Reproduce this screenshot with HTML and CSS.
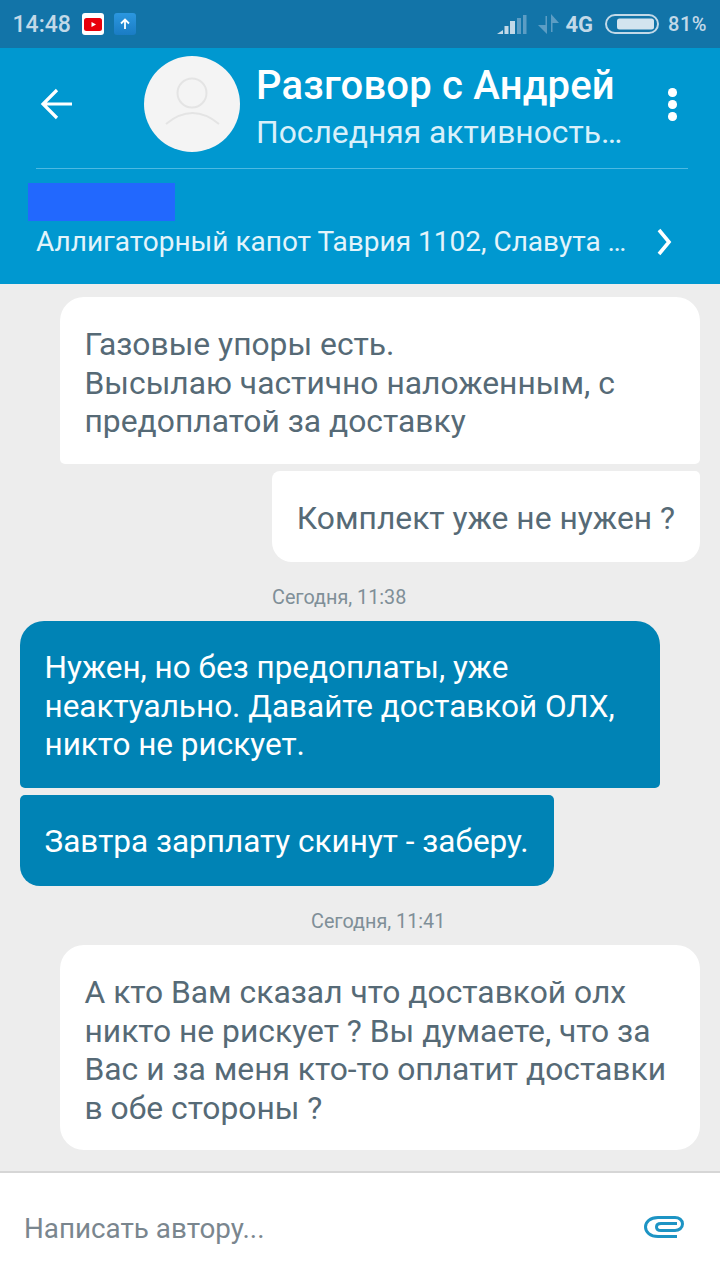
FILE: index.html
```html
<!DOCTYPE html>
<html lang="ru">
<head>
<meta charset="utf-8">
<title>Разговор с Андрей</title>
<link rel="stylesheet" href="styles.css">
</head>
<body>
<div class="app">
  <div class="status">
    <span class="time">14:48</span>
    <span class="note yt"><svg width="24" height="24" viewBox="0 0 24 24"><rect x="1" y="1" width="22" height="22" rx="3" fill="#fff"/><rect x="3" y="6" width="18" height="13" rx="2.5" fill="#e8000b"/><path d="M10.5 10l4.500 2.500-4.500 2.500z" fill="#fff"/></svg></span>
    <span class="note"><svg width="24" height="24" viewBox="0 0 24 24"><defs><linearGradient id="up" x1="0" y1="0" x2="0" y2="1"><stop offset="0" stop-color="#2b97e0"/><stop offset="1" stop-color="#1a7cc4"/></linearGradient></defs><rect x="1" y="1" width="22" height="22" rx="3" fill="url(#up)"/><path d="M12 17V7.500M8 11.500l4-4 4 4" fill="none" stroke="#fff" stroke-width="1.800"/></svg></span>
    <span class="spacer"></span>
    <svg class="signal" width="30" height="24" viewBox="0 0 30 24"><path d="M0 22l6-4v4z" fill="#c2d9e8"/><rect x="7.500" y="14" width="4" height="8" fill="#c2d9e8"/><rect x="13" y="9" width="5" height="13" fill="#c2d9e8"/><rect x="20" y="6" width="4" height="16" fill="#5c9dc4"/><rect x="26" y="3" width="3.500" height="19" fill="#5c9dc4"/></svg>
    <svg class="updown" width="24" height="24" viewBox="0 0 24 24"><path d="M10 22V4H8.500v9H1zM14 2v18h1.500v-9H22z" fill="#5c9dc4"/></svg>
    <span class="net">4G</span>
    <svg class="batt" width="54" height="20" viewBox="0 0 54 20"><rect x="1" y="1" width="52" height="18" rx="9" fill="none" stroke="#c2d9e8" stroke-width="2"/><rect x="12" y="4.500" width="37" height="11" rx="2.500" fill="#d3e4ef"/></svg>
    <span class="pct">81%</span>
  </div>
  <header class="head">
    <div class="top">
      <svg class="back" width="32" height="32" viewBox="0 0 32 32"><path d="M32 16H3M17 2L3 16l14 14" fill="none" stroke="#fff" stroke-width="3.200"/></svg>
      <div class="avatar"><svg width="96" height="96" viewBox="0 0 96 96"><circle cx="48" cy="37" r="14.500" fill="none" stroke="#e4e4e4" stroke-width="2"/><path d="M22 68Q48.500 46 75 68" fill="none" stroke="#e4e4e4" stroke-width="2"/></svg></div>
      <div class="who">
        <div class="title">Разговор с Андрей</div>
        <div class="seen">Последняя активность…</div>
      </div>
      <div class="dots"><i></i><i></i><i></i></div>
    </div>
    <div class="rule"></div>
    <div class="mask"></div>
    <div class="ad">
      <span class="adtext">Аллигаторный капот Таврия 1102, Славута …</span>
      <svg width="20" height="28" viewBox="0 0 20 28"><path d="M4 2l10 12L4 26" fill="none" stroke="#fff" stroke-width="3.600"/></svg>
    </div>
  </header>
  <main class="chat">
    <div class="msg in b1">Газовые упоры есть.<br>Высылаю частично наложенным, с предоплатой за доставку</div>
    <div class="msg in single b2">Комплект уже не нужен ?</div>
    <div class="stamp s1">Сегодня, 11:38</div>
    <div class="msg out b3">Нужен, но без предоплаты, уже неактуально. Давайте доставкой ОЛХ, никто не рискует.</div>
    <div class="msg out single b4">Завтра зарплату скинут - заберу.</div>
    <div class="stamp s2">Сегодня, 11:41</div>
    <div class="msg in b5">А кто Вам сказал что доставкой олх никто не рискует ? Вы думаете, что за Вас и за меня кто-то оплатит доставки в обе стороны ?</div>
  </main>
  <footer class="input">
    <span class="ph">Написать автору...</span>
    <svg class="clip" width="40" height="22" viewBox="0 0 40 22"><path d="M33 20.500H14C6 20.500 1.500 16 1.500 11S6 1.500 14 1.500H31C35 1.500 38.500 4 38.500 8S35 14.500 31 14.500H17C14 14.500 12.500 13 12.500 11S14 7.500 17 7.500H33" fill="none" stroke="#1d94c4" stroke-width="3"/></svg>
  </footer>
</div>
</body>
</html>
```
FILE: styles.css
```css
* { box-sizing: border-box; }
html, body { margin: 0; padding: 0; }
body { width: 720px; height: 1280px; overflow: hidden; font-family: Roboto, "Noto Sans", sans-serif; background: #ededed; }
.app { width: 720px; height: 1280px; display: flex; flex-direction: column; }
.status { height: 48px; flex: none; background: #1274a8; display: flex; align-items: center; padding: 0 13px 0 12.500px; color: #c2d9e8; font-weight: 500; }
.time { font-size: 23px; margin-right: 10px; }
.note { width: 24px; height: 24px; margin-right: 8px; display: block; }
.note svg { display: block; }
.spacer { flex: 1; }
.signal { margin-right: 10px; }
.updown { margin-right: 4px; }
.net { font-size: 22px; font-weight: 700; margin-right: 12px; }
.batt { margin-right: 9px; }
.pct { font-size: 20px; letter-spacing: .5px; }
.head { height: 236px; flex: none; background: #0098d0; color: #fff; padding: 0 32px 0 36px; display: flex; flex-direction: column; }
.top { height: 120px; display: flex; align-items: flex-start; }
.back { margin: 40px 72px 0 4px; flex: none; }
.avatar { width: 96px; height: 96px; margin-top: 8px; border-radius: 50%; background: #f4f4f4; flex: none; }
.avatar svg { display: block; }
.who { margin-left: 16px; flex: 1; }
.title { font-size: 40px; font-weight: 500; line-height: 42px; margin-top: 17px; letter-spacing: .2px; }
.seen { font-size: 31.800px; line-height: 36px; margin-top: 7px; color: #d9f0fa; }
.dots { width: 12px; margin: 40px 8px 0 0; display: flex; flex-direction: column; gap: 3.500px; }
.dots i { display: block; width: 8.500px; height: 8.500px; border-radius: 50%; background: #fff; }
.rule { height: 1px; background: #4db9e2; }
.mask { width: 147px; height: 38px; margin: 14px 0 0 -8px; background: #2268fe; }
.ad { display: flex; align-items: center; justify-content: space-between; margin-top: 3px; padding-right: 13px; }
.adtext { font-size: 28px; line-height: 36px; color: #e3f4fb; }
.chat { flex: 1; padding: 13px 20px 0; display: flex; flex-direction: column; align-items: flex-start; }
.msg { line-height: 38.500px; padding: 28px 25px 23.500px 24.500px; }
.single { padding: 28px 25px 24.500px 24.500px; }
.in { font-size: 31.800px; background: #fff; color: #566a76; align-self: flex-end; }
.out { font-size: 31.500px; background: #0083b5; color: #fff; }
.b1 { width: 640px; border-radius: 24px 24px 5px 5px; }
.b2 { margin-top: 7px; border-radius: 8px 5px 20px 20px; }
.b3 { width: 640px; border-radius: 24px 24px 5px 5px; }
.b4 { margin-top: 7px; border-radius: 5px 5px 20px 20px; }
.b5 { width: 640px; border-radius: 24px; padding-bottom: 23px; }
.stamp { font-size: 19.800px; line-height: 24px; color: #7f8f98; margin-top: 24px; margin-bottom: 11px; }
.s1 { margin-left: 252px; }
.s2 { margin-left: 291px; }
.input { height: 109px; flex: none; background: #fff; border-top: 2px solid #d6d6d6; display: flex; align-items: center; justify-content: space-between; padding: 0 36px 0 24px; }
.ph { font-size: 27.800px; color: #7a868e; margin-top: 3px; }
.clip { margin-top: 1px; }
```
